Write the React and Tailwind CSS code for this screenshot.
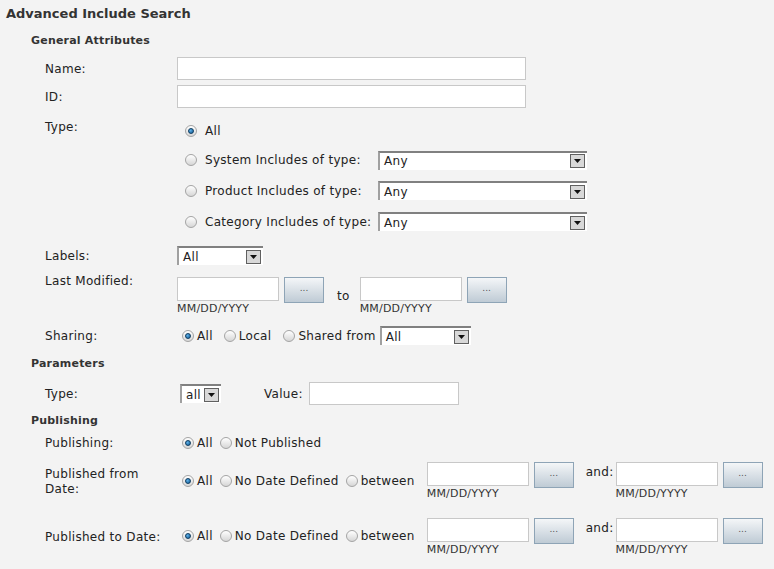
import React from 'react'

function Radio({ checked }) {
  return (
    <span className="flex h-[12px] w-[12px] shrink-0 items-center justify-center rounded-full border border-[#a4a4a4] bg-gradient-to-b from-[#ffffff] to-[#d6d6d6]">
      {checked && (
        <span className="h-[6px] w-[6px] rounded-full border border-[#0e3c60] bg-[radial-gradient(circle_at_35%_35%,#5fb0e8,#0f5a94)]" />
      )}
    </span>
  )
}

function Select({ width, value }) {
  return (
    <div className={`flex h-[19px] items-center border-t-2 border-l-2 border-t-[#808080] border-l-[#a0a0a0] bg-white pr-[2px] ${width}`}>
      <span className="flex-1 pl-[4px] leading-[16px]">{value}</span>
      <span className="flex h-[14px] w-[15px] items-center justify-center border border-[#606060] bg-[#d8d8d8]">
        <svg width="7" height="4" viewBox="0 0 7 4"><path d="M0 0h7L3.5 4z" fill="#111" /></svg>
      </span>
    </div>
  )
}

function TextBox({ width, height }) {
  return <div className={`border border-[#c8c8c8] bg-white ${width} ${height}`} />
}

function DotsButton() {
  return (
    <div className="ml-[5px] flex h-[26px] w-[40px] items-center justify-center border border-[#8ea4b6] bg-gradient-to-b from-[#f4f6f8] to-[#bfcbd5] pb-[3px] text-[9px] tracking-normal text-[#555]">
      ...
    </div>
  )
}

function DateField() {
  return (
    <div className="flex flex-col">
      <div className="flex">
        <TextBox width="w-[102px]" height="h-[24px]" />
        <DotsButton />
      </div>
      <span className="text-[11px] leading-[12px] tracking-[0.2px] text-[#333]">MM/DD/YYYY</span>
    </div>
  )
}

function Opt({ checked, label, className = '' }) {
  return (
    <span className={`flex items-center ${className}`}>
      <Radio checked={checked} />
      <span className="ml-[3px]">{label}</span>
    </span>
  )
}

export default function App() {
  return (
    <div className="h-[569px] w-[774px] overflow-hidden bg-[#f3f3f3] font-['DejaVu_Sans',Verdana,sans-serif] text-[12px] tracking-[0.3px] text-[#222]">
      <div className="flex h-[27px] items-center pl-[6px] text-[13px] font-bold tracking-normal text-[#333]">Advanced Include Search</div>
      <div className="flex h-[28px] items-center pl-[31px] text-[11px] font-bold tracking-[0.2px] text-[#333]">General Attributes</div>

      <div className="mt-[2px] flex h-[23px] items-center pl-[45px]">
        <span className="w-[132px]">Name:</span>
        <TextBox width="w-[349px]" height="h-[23px]" />
      </div>
      <div className="mt-[5px] flex h-[23px] items-center pl-[45px]">
        <span className="w-[132px]">ID:</span>
        <TextBox width="w-[349px]" height="h-[23px]" />
      </div>

      <div className="mt-[10px] flex pl-[45px]">
        <span className="w-[132px] leading-[18px]">Type:</span>
        <div className="flex flex-col pl-[8px]">
          <div className="flex h-[26px] items-center">
            <Radio checked />
            <span className="ml-[8px]">All</span>
          </div>
          {['System Includes of type:', 'Product Includes of type:', 'Category Includes of type:'].map((t, i) => (
            <div key={t} className={`flex h-[31px] items-center ${i === 0 ? 'pt-[1px]' : ''}`}>
              <Radio />
              <span className="ml-[8px] w-[173px]">{t}</span>
              <Select width="w-[209px]" value="Any" />
            </div>
          ))}
        </div>
      </div>

      <div className="mt-[9px] flex h-[19px] items-center pl-[45px]">
        <span className="w-[132px]">Labels:</span>
        <Select width="w-[86px]" value="All" />
      </div>

      <div className="mt-[7px] flex pl-[45px]">
        <span className="w-[132px] leading-[18px]">Last Modified:</span>
        <div className="flex items-start pt-[5px]">
          <DateField />
          <span className="ml-[13px] mr-[10px] mt-[10px]">to</span>
          <DateField />
        </div>
      </div>

      <div className="mt-[11px] flex h-[19px] items-center pl-[45px]">
        <span className="w-[137px]">Sharing:</span>
        <Opt checked label="All" />
        <Opt label="Local" className="ml-[11px]" />
        <Opt label="Shared from" className="ml-[12px]" />
        <span className="ml-[4px]"><Select width="w-[91px]" value="All" /></span>
      </div>

      <div className="flex h-[37px] items-center pl-[31px] pt-[2px] text-[11px] font-bold tracking-[0.2px] text-[#333]">Parameters</div>

      <div className="flex h-[23px] items-center pl-[45px]">
        <span className="w-[135px]">Type:</span>
        <Select width="w-[41px]" value="all" />
        <span className="ml-[43px] w-[45px]">Value:</span>
        <TextBox width="w-[150px]" height="h-[23px]" />
      </div>

      <div className="flex h-[29px] items-center pl-[31px] pt-[3px] text-[11px] font-bold tracking-[0.2px] text-[#333]">Publishing</div>

      <div className="flex h-[18px] items-center pl-[45px]">
        <span className="w-[137px]">Publishing:</span>
        <Opt checked label="All" />
        <Opt label="Not Published" className="ml-[7px]" />
      </div>

      <div className="mt-[10px] flex items-start pl-[45px]">
        <span className="w-[137px] pt-[5px] leading-[15px]">Published from<br />Date:</span>
        <div className="mt-[10px] flex h-[18px] items-center">
          <Opt checked label="All" />
          <Opt label="No Date Defined" className="ml-[7px]" />
          <Opt label="between" className="ml-[7px]" />
        </div>
        <div className="ml-[12px] flex items-start">
          <DateField />
          <span className="ml-[12px] mr-[2px] leading-[18px] mt-[1px]">and:</span>
          <DateField />
        </div>
      </div>

      <div className="mt-[18px] flex items-start pl-[45px]">
        <span className="mt-[10px] flex h-[18px] w-[137px] items-center">Published to Date:</span>
        <div className="mt-[9px] flex h-[18px] items-center">
          <Opt checked label="All" />
          <Opt label="No Date Defined" className="ml-[7px]" />
          <Opt label="between" className="ml-[7px]" />
        </div>
        <div className="ml-[12px] flex items-start">
          <DateField />
          <span className="ml-[12px] mr-[2px] leading-[18px] mt-[1px]">and:</span>
          <DateField />
        </div>
      </div>
    </div>
  )
}
